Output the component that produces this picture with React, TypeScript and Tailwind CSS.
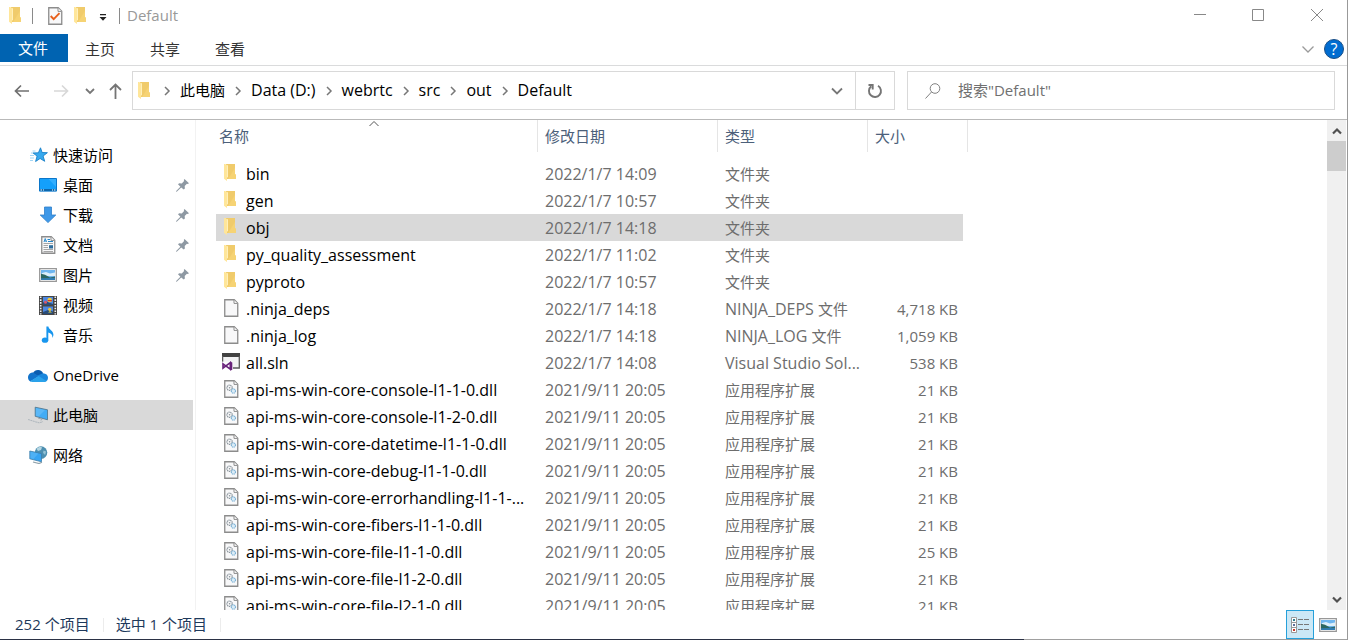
import React from "react";

type IconProps = { className?: string };

const FolderIcon = ({ className = "" }: IconProps) => (
  <svg className={className} width="13" height="17" viewBox="0 0 13 17">
    <path d="M2 0h9v10l1 .6V15H2z" fill="#f6d374" />
    <path d="M2 0h9v4L4 15H2z" fill="#edc766" opacity=".6" />
    <path d="M0 0h1l3 1.6v11.6l-1 .5V17L0 14.8z" fill="#ffe69a" />
    <path d="M3.5 1.4V13" stroke="#fff2c4" strokeWidth=".8" />
  </svg>
);

const SheetShape = () => (
  <>
    <path d="M.75.75h9.5l3.5 3.5v13h-13z" fill="#f8f8f9" stroke="#8c8c8c" strokeWidth="1.3" />
    <path d="M10 1v3.4h3.6" fill="#fff" stroke="#8c8c8c" strokeWidth="1" />
  </>
);

const FileIcon = () => (
  <svg width="15" height="18" viewBox="0 0 15 18">
    <SheetShape />
  </svg>
);

const DllIcon = () => (
  <svg width="15" height="18" viewBox="0 0 15 18">
    <SheetShape />
    <circle cx="5.6" cy="7.8" r="2.6" fill="none" stroke="#87929a" strokeWidth="1.3" strokeDasharray="1.2 .6" />
    <circle cx="5.6" cy="7.8" r=".8" fill="#87929a" />
    <circle cx="9.4" cy="11" r="2.1" fill="#dcecf6" stroke="#7ab1d6" strokeWidth="1.2" strokeDasharray="1.1 .5" />
  </svg>
);

const SlnIcon = () => (
  <svg width="18" height="18" viewBox="0 0 18 18">
    <path d="M.5.5h16.8v14H.5z" fill="#f2f2f3" />
    <path d="M0 0h18v4H0z" fill="#424242" />
    <path d="M.6 3v6M17.3 3v12H11" fill="none" stroke="#5a5a5a" strokeWidth="1.3" />
    <path d="M0 8.5h10.5V18H0z" fill="#fff" opacity=".7" />
    <path d="M1 10.8l7.3 5.4V9.6L1 15.2z" fill="none" stroke="#68217a" strokeWidth="1.6" />
    <path d="M8 8.5l2.3 1v7.2L8 17.6z" fill="#68217a" />
  </svg>
);

const CheckSheetIcon = () => (
  <svg width="15" height="18" viewBox="0 0 15 18">
    <SheetShape />
    <path d="M2.7 9l3 3.2 5.8-6" fill="none" stroke="#e8601c" strokeWidth="1.9" />
  </svg>
);

const StarIcon = () => (
  <svg width="18" height="17" viewBox="0 0 18 17">
    <path d="M10.500.8l1.6 4.7 5.3.2-4.3 3.3 1.6 5.3-4.6-2.8-4.5 3 1.5-5.4L3 6l5.4-.2z" fill="#37a9ee" stroke="#1780c8" strokeWidth=".9" />
    <path d="M2.5 4h3M1 6h2.5M0 8.5h4M0 11h4M0 13.5h3" stroke="#8ccbf3" strokeWidth=".8" />
  </svg>
);

const DesktopIcon = () => (
  <svg width="18" height="14" viewBox="0 0 18 14">
    <path d="M.5.5h17v12.6H.5z" fill="#14a0fb" stroke="#0b76c9" />
    <path d="M9.5 1H17v8z" fill="#40b4ff" opacity=".7" />
    <path d="M1 11h16v2H1z" fill="#0c68ae" />
    <path d="M1.5 12H3M4 12h1M13 12h1M15 12h1.5" stroke="#fff" />
  </svg>
);

const DownloadIcon = () => (
  <svg width="18" height="18" viewBox="0 0 18 18">
    <path d="M5.5 1h7v8h4.3L9 16.6 1.2 9h4.3z" fill="#3e98e8" stroke="#2f7fc9" strokeWidth=".8" />
  </svg>
);

const DocumentIcon = () => (
  <svg width="15" height="18" viewBox="0 0 15 18">
    <SheetShape />
    <path d="M3 6l1.2-3.5L5.5 6M3.5 5h2" fill="none" stroke="#2386c8" strokeWidth=".9" />
    <path d="M6.5 3.5H9M7 5.5h5" stroke="#2386c8" />
    <path d="M2.5 7.5H12M2.5 9.5H7M2.5 11.5H7M2.5 13.5H12M2.5 15.5H12" stroke="#a6a6a6" />
    <path d="M8 9.2h4v3.3H8z" fill="#2f6d9c" />
  </svg>
);

const PictureIcon = () => (
  <svg width="18" height="14" viewBox="0 0 18 14">
    <path d="M.7.7h16.6v12.6H.7z" fill="#fff" stroke="#989898" strokeWidth="1.3" />
    <path d="M2 2h14v10H2z" fill="#6eb5ef" />
    <path d="M3 5l4-1 4 1.5 5-1V8H2z" fill="#dceefa" />
    <path d="M2 5.8l4 1 5 2.7 5-1V12H2z" fill="#2c6660" />
    <path d="M2 10.3l14-.6V12H2z" fill="#317bb0" />
  </svg>
);

const VideoIcon = () => (
  <svg width="18" height="19" viewBox="0 0 18 19">
    <path d="M0 0h18v19H0z" fill="#454545" />
    <path d="M1.7.5v18M16.3.5v18" stroke="#f2f2f2" strokeWidth="1.6" strokeDasharray="1.6 1.2" />
    <path d="M4 1h10v8H4zM4 10.4h10V18H4z" fill="#4c87e0" />
    <path d="M4 6.5l3-1 7 2.5v1H4zM4 16l5-2 5 1.5V18H4z" fill="#284c78" />
    <circle cx="10.7" cy="4" r="2.3" fill="#efc83c" />
    <path d="M8.6 4h4.3v1.2H8.6z" fill="#cf3a2c" />
    <circle cx="6.5" cy="6.2" r="1.5" fill="#d8566b" />
    <circle cx="10.7" cy="13.3" r="1.6" fill="#e9c53a" />
    <path d="M9 16.5l2-1.5 2 1.5z" fill="#e7d33f" />
  </svg>
);

const MusicIcon = () => (
  <svg width="18" height="18" viewBox="0 0 18 18">
    <ellipse cx="6" cy="14.2" rx="3.2" ry="2.6" fill="#1896ee" />
    <path d="M7.4.5h2c.2 3.1 5 4 5 8 0 1.3-.4 2.5-1 3.3.3-3-1.6-4.6-4.1-5.2v8H7.4z" fill="#1896ee" />
  </svg>
);

const CloudIcon = () => (
  <svg width="20" height="13" viewBox="0 0 20 13">
    <path d="M5 4a5.6 5.6 0 0 1 10.2.4L10 8z" fill="#0a5db0" />
    <path d="M5 3.6C2 3.6 0 5.9 0 8.4c0 1.8 1 3.2 2.3 4L11 7.2z" fill="#1273cb" />
    <path d="M15 4.2c3 .1 5 2 5 4.5 0 2-1 3.2-2.5 3.9L8.5 7z" fill="#1a87dd" />
    <path d="M2 12.2L10.6 7l8 5c-.7.6-1.4 1-2.6 1H4.5C3.5 13 2.6 12.7 2 12.2z" fill="#2aa2ea" />
  </svg>
);

const ComputerIcon = () => (
  <svg width="20" height="18" viewBox="0 0 20 18">
    <path d="M7.2 1.2l12.3 2.600v10L7.200 10.300z" fill="#41acf5" stroke="#4d7186" strokeWidth=".8" />
    <path d="M8 2l9 2-6.500 6.500L8 9.800z" fill="#7cc8fa" opacity=".45" />
    <path d="M10 12l4 1.2-1 1.3" fill="none" stroke="#9aa5ad" />
    <path d="M0 13.5l11 3.3 4-1.2" fill="none" stroke="#b0b8be" strokeWidth="1.1" strokeDasharray="2 .5" />
  </svg>
);

const NetworkIcon = () => (
  <svg width="19" height="18" viewBox="0 0 19 18">
    <circle cx="12" cy="6.6" r="6.3" fill="#4d8fb0" />
    <path d="M7.500 3c1.500-2 4-2.200 5.500-1.600L12 4 9 5z" fill="#b5d6e2" />
    <path d="M14.500 4.500l2.600 1-1 3.600-2-2z" fill="#93c2d6" />
    <path d="M.8 5l11.700 2.600v8.200L.8 12.800z" fill="#36a4f3" stroke="#3d7da8" strokeWidth=".8" />
    <path d="M1.400 5.700l8 1.800-5 5.600-3-.8z" fill="#6cc0f8" opacity=".45" />
    <path d="M4 16l6 1.5 3-1.2" fill="none" stroke="#8fa0a9" strokeWidth="1.2" />
  </svg>
);

const PinIcon = () => (
  <svg width="13" height="13" viewBox="0 0 13 13">
    <path d="M8.5 0l4.5 4.3-1.3.6-.8-.2-2.200 2.300.2 2.600-1.200 1L5.200 8.400 1 12.600l-1 .4.4-1.200 4-4.100L2 5.300l1.200-1 2.600.1L8.100 2l-.3-1z" fill="#8e99a3" />
  </svg>
);

type ChevronProps = { d: string; color?: string; w?: number; h?: number; sw?: number };

const Chevron = ({ d, color = "#6d6d6d", w = 12, h = 12, sw = 1.5 }: ChevronProps) => (
  <svg width={w} height={h} viewBox={`0 0 ${w} ${h}`}>
    <path d={d} fill="none" stroke={color} strokeWidth={sw} />
  </svg>
);

const DOWN = "M2 4l4 4 4-4";
const RIGHT = "M4 2l4 4-4 4";

const crumbs = ["此电脑", "Data (D:)", "webrtc", "src", "out", "Default"];

const quickAccess = [
  { label: "桌面", icon: <DesktopIcon />, pinned: true },
  { label: "下载", icon: <DownloadIcon />, pinned: true },
  { label: "文档", icon: <DocumentIcon />, pinned: true },
  { label: "图片", icon: <PictureIcon />, pinned: true },
  { label: "视频", icon: <VideoIcon />, pinned: false },
  { label: "音乐", icon: <MusicIcon />, pinned: false },
];

const roots = [
  { label: "OneDrive", icon: <CloudIcon />, active: false },
  { label: "此电脑", icon: <ComputerIcon />, active: true },
  { label: "网络", icon: <NetworkIcon />, active: false },
];

type Kind = "folder" | "file" | "sln" | "dll";
// typeName is the latin part of the type, typeLabel the chinese part
type Entry = { name: string; date: string; typeName?: string; typeLabel?: string; size: string; kind: Kind };

const folder = (name: string, date: string): Entry => ({ name, date, typeLabel: "文件夹", size: "", kind: "folder" });
const dll = (name: string, size = "21 KB"): Entry => ({
  name,
  date: "2021/9/11 20:05",
  typeLabel: "应用程序扩展",
  size,
  kind: "dll",
});

const entries: Entry[] = [
  folder("bin", "2022/1/7 14:09"),
  folder("gen", "2022/1/7 10:57"),
  folder("obj", "2022/1/7 14:18"),
  folder("py_quality_assessment", "2022/1/7 11:02"),
  folder("pyproto", "2022/1/7 10:57"),
  { name: ".ninja_deps", date: "2022/1/7 14:18", typeName: "NINJA_DEPS ", typeLabel: "文件", size: "4,718 KB", kind: "file" },
  { name: ".ninja_log", date: "2022/1/7 14:18", typeName: "NINJA_LOG ", typeLabel: "文件", size: "1,059 KB", kind: "file" },
  { name: "all.sln", date: "2022/1/7 14:08", typeName: "Visual Studio Sol...", size: "538 KB", kind: "sln" },
  dll("api-ms-win-core-console-l1-1-0.dll"),
  dll("api-ms-win-core-console-l1-2-0.dll"),
  dll("api-ms-win-core-datetime-l1-1-0.dll"),
  dll("api-ms-win-core-debug-l1-1-0.dll"),
  dll("api-ms-win-core-errorhandling-l1-1-..."),
  dll("api-ms-win-core-fibers-l1-1-0.dll"),
  dll("api-ms-win-core-file-l1-1-0.dll", "25 KB"),
  dll("api-ms-win-core-file-l1-2-0.dll"),
  dll("api-ms-win-core-file-l2-1-0.dll"),
];

const kindIcons: Record<Kind, React.ReactNode> = {
  folder: <FolderIcon />,
  file: <FileIcon />,
  sln: <SlnIcon />,
  dll: <DllIcon />,
};

const TitleBar = () => (
  <header className="flex h-[34px] shrink-0 items-start justify-between">
    <div className="flex h-[31px] items-center pl-[9px]">
      <FolderIcon />
      <span className="ml-[10px] h-4 w-px bg-[#8a8a8a]" />
      <button aria-label="属性" className="ml-[15px]">
        <CheckSheetIcon />
      </button>
      <button aria-label="新建文件夹" className="ml-[11px]">
        <FolderIcon />
      </button>
      <button aria-label="自定义快速访问工具栏" className="ml-3 pt-1">
        <svg width="8" height="7" viewBox="0 0 8 7">
          <path d="M1 0h6v1.2H1zM.5 3h7L4 6.8z" fill="#222" />
        </svg>
      </button>
      <span className="ml-3 h-4 w-px bg-[#8a8a8a]" />
      <h1 className="ml-[7px] pb-0.5 text-[#999]">Default</h1>
    </div>
    <div className="flex h-[30px]">
      <button aria-label="最小化" className="flex w-[58px] items-center justify-center">
        <Chevron d="M0 5.5h12" color="#888" sw={1} />
      </button>
      <button aria-label="最大化" className="flex w-[58px] items-center justify-center">
        <Chevron d="M.5.5h11v11H.5z" color="#888" sw={1} />
      </button>
      <button aria-label="关闭" className="flex w-[60px] items-center justify-center">
        <Chevron d="M0 0l12 12M12 0L0 12" color="#888" sw={1} />
      </button>
    </div>
  </header>
);

const Ribbon = () => (
  <nav className="flex h-8 shrink-0 items-start border-b border-[#dadbdc]">
    <button className="h-7 w-[68px] bg-[#0063b1] pr-0.5 text-white">文件</button>
    <button className="h-7 w-[65px] pt-0.5 pr-px text-[#333]">主页</button>
    <button className="h-7 w-[65px] pt-0.5 pr-px text-[#333]">共享</button>
    <button className="h-7 w-[65px] pt-0.5 pr-px text-[#333]">查看</button>
    <div className="ml-auto flex items-center gap-2.5 pt-[5px] pr-[3px]">
      <button aria-label="展开功能区">
        <Chevron d="M.5 3.5L6 9l5.5-5.5" color="#9a9a9a" sw={1.3} />
      </button>
      <button
        aria-label="帮助"
        className="flex size-5 items-center justify-center rounded-full border border-[#1b4f86] bg-[#006cd0] text-base leading-none font-medium text-white"
      >
        ?
      </button>
    </div>
  </nav>
);

const AddressBar = () => (
  <div className="flex h-[54px] shrink-0 items-start border-b border-[#b9b9b9] pt-[5px] pr-3">
    <div className="flex h-10 w-[132px] shrink-0 items-center pl-3.5">
      <button aria-label="后退">
        <Chevron w={16} h={14} d="M7 1.5L1.5 7 7 12.5M1.5 7H15" color="#707070" sw={1.7} />
      </button>
      <button aria-label="前进" className="ml-[23px]">
        <Chevron w={16} h={14} d="M9 1.5L14.5 7 9 12.5M14.5 7H1" color="#d8d8d8" sw={1.7} />
      </button>
      <button aria-label="最近浏览的位置" className="ml-[15px]">
        <Chevron d={DOWN} color="#777" sw={1.8} />
      </button>
      <button aria-label="上移" className="ml-[13px]">
        <Chevron w={13} h={16} d="M1 7l5.5-5.5L12 7M6.5 1.5V16" color="#757575" sw={1.8} />
      </button>
    </div>
    <div className="flex h-[39px] flex-[761] items-stretch border border-[#d9d9d9]">
      <div className="flex flex-1 items-center pl-[5px]">
        <FolderIcon className="mr-[3px]" />
        {crumbs.map((crumb, i) => (
          <React.Fragment key={crumb}>
            <span className="flex w-[26px] justify-center">
              <Chevron d={RIGHT} color="#777" />
            </span>
            <a href="#" className={`pb-px text-black ${i > 0 ? "text-base leading-5" : ""}`}>
              {crumb}
            </a>
          </React.Fragment>
        ))}
      </div>
      <button aria-label="上一个位置" className="flex w-9 items-center justify-center">
        <Chevron d="M1 3.5l5 5 5-5" color="#777" sw={1.8} />
      </button>
      <button aria-label="刷新" className="flex w-[39px] items-center justify-center border-l border-[#d9d9d9]">
        <Chevron w={16} h={16} d="M4.2 3.3A6 6 0 1 0 11 2.8M1.5 2h4.2v4.5" color="#757575" sw={1.9} />
      </button>
    </div>
    <label className="ml-3 flex h-[39px] flex-[409] items-center border border-[#d9d9d9] pl-[17px]">
      <svg width="16" height="16" viewBox="0 0 16 16" fill="none" stroke="#808080">
        <circle cx="10" cy="5.5" r="4.8" />
        <path d="M6.5 9L.5 15.5" />
      </svg>
      <input
        aria-label="搜索"
        placeholder={'搜索"Default"'}
        className="ml-[17px] min-w-0 flex-1 pb-px outline-none placeholder:text-[#707070]"
      />
    </label>
  </div>
);

const Sidebar = () => (
  <aside className="w-[196px] shrink-0 border-r border-[#f2f2f2] pt-5 text-black">
    <a href="#" className="flex h-[30px] items-center pl-[30px]">
      <StarIcon />
      <span className="ml-[5px]">快速访问</span>
    </a>
    {quickAccess.map((item) => (
      <a key={item.label} href="#" className="flex h-[30px] items-center pr-1.5 pl-[39px]">
        <span className="flex w-[18px] justify-center">{item.icon}</span>
        <span className="ml-1.5 flex-1">{item.label}</span>
        {item.pinned && <PinIcon />}
      </a>
    ))}
    {roots.map((item) => (
      <a
        key={item.label}
        href="#"
        className={`mt-2.5 mr-0.5 flex h-[30px] items-center pl-7 ${item.active ? "bg-[#d9d9d9]" : ""}`}
      >
        <span className="flex w-5 justify-center">{item.icon}</span>
        <span className="ml-[5px]">{item.label}</span>
      </a>
    ))}
  </aside>
);

const columns = ["修改日期", "类型", "大小"];

const FileList = () => (
  <main className="min-w-0 flex-1 overflow-hidden pl-5">
    <table className="w-[752px] table-fixed text-left">
      <colgroup>
        <col className="w-[322px]" />
        <col className="w-[180px]" />
        <col className="w-[150px]" />
        <col className="w-[95px]" />
        <col className="w-[5px]" />
      </colgroup>
      <thead className="text-[#4c607a]">
        <tr className="h-10 align-top">
          <th className="p-0 font-normal">
            <div className="relative h-8 border-r border-[#e5e5e5] pl-[3px] leading-8">
              名称
              <span className="absolute top-0 left-[152px]">
                <Chevron w={12} h={7} d="M1.5 6L6 1.5 10.5 6" color="#555" sw={1} />
              </span>
            </div>
          </th>
          {columns.map((label, i) => (
            <th key={label} className="p-0 font-normal">
              <div className={`h-8 border-[#e5e5e5] pl-[7px] leading-8 ${i < 2 ? "border-r" : ""}`}>{label}</div>
            </th>
          ))}
          <td className="p-0">
            <div className="h-8 border-r border-[#e5e5e5]" />
          </td>
        </tr>
      </thead>
      <tbody className="text-[#6d6d6d]">
        {entries.map((entry) => {
          const bg = entry.name === "obj" ? "bg-[#d9d9d9]" : "";
          return (
            <tr key={entry.name} className="h-[27px] whitespace-nowrap">
              <td className={`p-0 ${bg}`}>
                <div className="flex h-[27px] items-center text-black">
                  <span className={`flex w-[30px] pb-0.5 ${entry.kind === "sln" ? "pl-1.5" : "pl-2"}`}>
                    {kindIcons[entry.kind]}
                  </span>
                  <span className="pt-px text-base leading-5">{entry.name}</span>
                </div>
              </td>
              <td className={`p-0 pt-px pl-[7px] text-base leading-5 ${bg}`}>{entry.date}</td>
              <td className={`p-0 pl-[7px] ${bg}`}>
                {entry.typeName && <span className="text-base leading-5">{entry.typeName}</span>}
                {entry.typeLabel}
              </td>
              <td className={`p-0 pr-[5px] text-right ${bg}`}>{entry.size}</td>
              <td className="p-0" />
            </tr>
          );
        })}
      </tbody>
    </table>
  </main>
);

const ScrollBar = () => (
  <div className="mr-px flex w-[19px] shrink-0 flex-col bg-[#f0f0f0]">
    <button aria-label="向上滚动" className="flex h-[21px] items-center justify-center">
      <Chevron w={10} h={8} d="M1 6.5l4-4 4 4" color="#505050" sw={2.2} />
    </button>
    <div className="h-[30px] bg-[#cdcdcd]" />
    <button aria-label="向下滚动" className="mt-auto flex h-[21px] items-center justify-center">
      <Chevron w={10} h={8} d="M1 1.5l4 4 4-4" color="#505050" sw={2.2} />
    </button>
  </div>
);

const StatusBar = () => (
  <footer className="flex h-[29px] shrink-0 items-center text-[#1e395b]">
    <span className="pb-0.5 pl-[15px]">252 个项目</span>
    <span className="ml-[13px] h-3.5 w-px bg-[#ececec]" />
    <span className="pb-0.5 pl-3">选中 1 个项目</span>
    <span className="ml-[13px] h-3.5 w-px bg-[#ececec]" />
    <button
      aria-label="详细信息"
      className="ml-auto flex h-[29px] w-7 items-center justify-center border border-[#26a0da] bg-[#cce8f6]"
    >
      <svg width="18" height="16" viewBox="0 0 18 16">
        <path d="M.5.5h5v15h-5zM.5 5.5h5M.5 10.5h5" fill="#fff" stroke="#999" />
        <path d="M7 2.5h5M13 2.5h5M7 7.5h5M13 7.5h5M7 12.5h5M13 12.5h5" stroke="#777" />
        <path d="M2 2h2v2H2z" fill="#2f7f90" />
        <path d="M2 7h2v2H2z" fill="#5a6f9c" />
        <path d="M2 12h2v2H2z" fill="#c8382a" />
      </svg>
    </button>
    <button aria-label="大缩略图" className="mr-[5px] flex h-[29px] w-7 items-center justify-center">
      <PictureIcon />
    </button>
  </footer>
);

const App = () => (
  <div className="flex h-screen flex-col overflow-hidden border-r border-[#999] bg-white font-['Open_Sans','Noto_Sans_CJK_SC',sans-serif] text-[15px] leading-5">
    <TitleBar />
    <Ribbon />
    <AddressBar />
    <div className="flex min-h-0 flex-1">
      <Sidebar />
      <FileList />
      <ScrollBar />
    </div>
    <StatusBar />
    <div className="flex h-px shrink-0">
      <div className="w-[76%] bg-[#2b3245]" />
      <div className="flex-1 bg-[#a0a0a0]" />
    </div>
  </div>
);

export default App;
